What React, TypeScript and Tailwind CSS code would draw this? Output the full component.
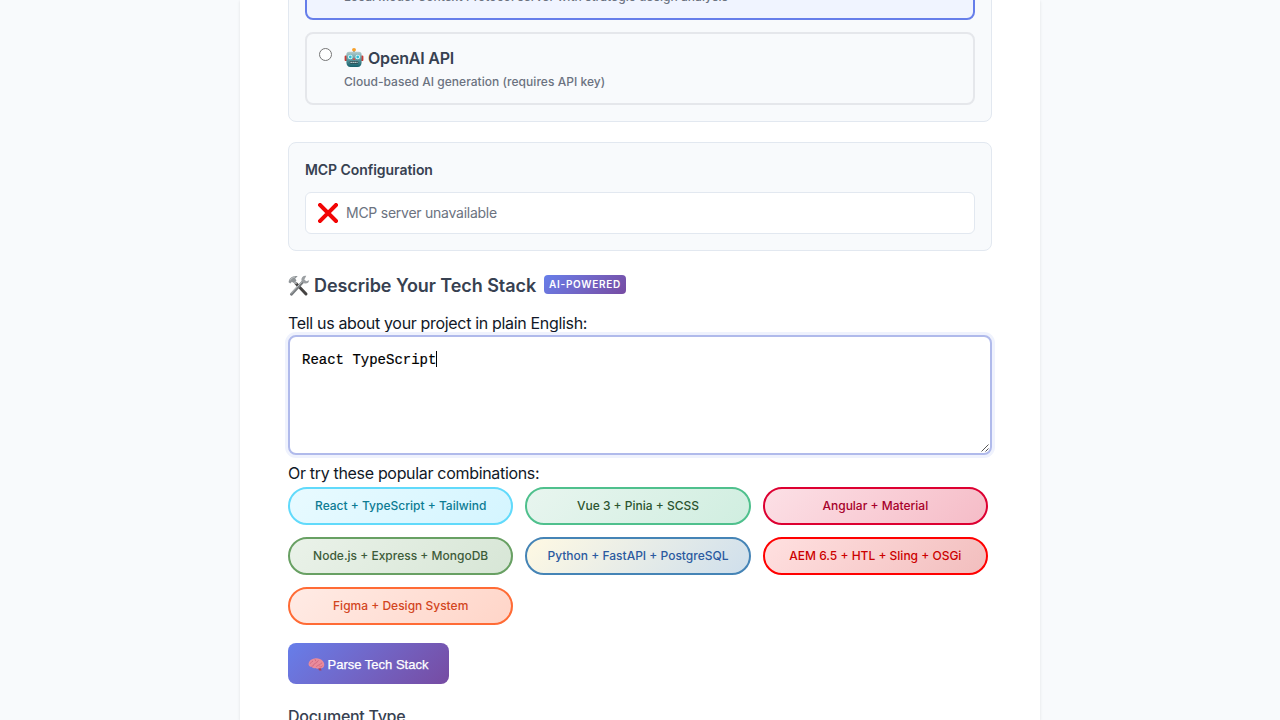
import React from 'react';

function RobotIcon() {
  return (
    <svg className="h-5 w-5 shrink-0" viewBox="0 0 20 20">
      <defs>
        <linearGradient id="robotFace" x1="0" y1="0" x2="0" y2="1">
          <stop offset="0" stopColor="#b5cccd" />
          <stop offset="0.4" stopColor="#6ba4aa" />
          <stop offset="1" stopColor="#14606b" />
        </linearGradient>
      </defs>
      <rect x="9" y="2.5" width="2" height="3" fill="#8a9a9d" />
      <ellipse cx="10" cy="1.8" rx="2" ry="1.7" fill="#f7a02b" />
      <rect x="0.6" y="7.5" width="3" height="5.6" rx="1.2" fill="#c83a34" />
      <rect x="16.4" y="7.5" width="3" height="5.6" rx="1.2" fill="#c83a34" />
      <path d="M5 3.800h10c1.700 0 2.600 1 2.600 2.700v8c0 2.700-1.500 4.500-4.100 4.500h-7c-2.600 0-4.100-1.800-4.100-4.500v-8C2.400 4.800 3.300 3.800 5 3.800z" fill="url(#robotFace)" />
      <circle cx="6.3" cy="9" r="2.3" fill="#dffcff" />
      <circle cx="13.7" cy="9" r="2.3" fill="#dffcff" />
      <circle cx="6.3" cy="9" r="1.4" fill="#2fbdd6" />
      <circle cx="13.7" cy="9" r="1.4" fill="#2fbdd6" />
      <path d="M10 9.500l1.400 2.600H8.600z" fill="#e0443c" />
      <rect x="5.7" y="13" width="8.6" height="2.8" rx="1" fill="#2b4a50" />
      <path d="M6.500 14.400h7" stroke="#d3e8ea" strokeWidth="1.3" strokeDasharray="1.3 0.7" />
    </svg>
  );
}

function ToolsIcon() {
  return (
    <svg className="h-[22px] w-[22px] shrink-0" viewBox="0 0 22 22" fill="none">
      <path d="M8 8.500L18 19" stroke="#454342" strokeWidth="3" strokeLinecap="round" />
      <path d="M5 4.500L8.500 8.800" stroke="#a7abae" strokeWidth="2" />
      <path d="M.6 7.200C.8 4.400 2.300 2.300 4.900 1.400c1.500-.5 3.400-.7 4.800-.2L7.200 3.500l1.300 1.900-3 2.600-1.600-1.200-1.600 1.700z" fill="#8f9497" />
      <path d="M2 5.500C3 3.500 4.500 2.500 7 2" stroke="#c9cccd" strokeWidth="0.8" />
      <path d="M3.400 19.300L15.200 6.500" stroke="#777b7e" strokeWidth="2.8" strokeLinecap="round" />
      <path d="M3 18.600L14.500 6.200" stroke="#c2c5c7" strokeWidth="0.9" />
      <path d="M18.300.8c-2.800-.6-5 1.400-4.900 3.900.1 2.300 2 4 4.200 3.900 2-.1 3.400-1.400 3.600-3.400l-2.900 1-2-1.800z" fill="#9b9fa2" />
    </svg>
  );
}

function CrossIcon() {
  return (
    <svg className="h-5 w-5 shrink-0" viewBox="0 0 20 20">
      <path d="M2 2L18 18M18 2L2 18" stroke="#f20505" strokeWidth="4" strokeLinecap="square" />
    </svg>
  );
}

function BrainIcon() {
  return (
    <svg className="h-[17px] w-[17px] shrink-0" viewBox="0 0 17 17">
      <path d="M9.300 11h3.400l.8 3.500h-2.200z" fill="#a8405e" />
      <path d="M.6 8.600c-.2-3 2.300-5.800 6-6.200 3-.5 6.300.4 8.200 2.700 1.500 1.800 2 4.300.9 5.700-1 1.400-2.700 1.800-4.300 1.400-1.500.8-3.200.5-4-.3-1.500.5-3 .2-3.700-.8C2 10.900.7 10 .6 8.600z" fill="#ea8b9b" />
      <path d="M2 7.800c1-.7 1.500-2.500 3-2.700M5 9.500c1.300-.3.900-2.200 2.600-2.300s1.300-2.400 3-2.700M8.200 10.500c1-.1 1.400-1.400 2.900-1.500s1.400-2.200 3-2M7 3.200l.8 2M11.500 10.800c1.200.5 2.500-.1 3.200-1.300M3.500 10.300l2-.6" fill="none" stroke="#c9607a" strokeWidth="0.75" />
    </svg>
  );
}

interface Combo {
  label: string;
  tone: string;
}

const combos: Combo[] = [
  { label: 'React + TypeScript + Tailwind', tone: 'border-[#61dafb] from-[#e8faff] to-[#d4f5ff] text-[#0c7b93]' },
  { label: 'Vue 3 + Pinia + SCSS', tone: 'border-[#4fc08d] from-[#e8f5ef] to-[#d0eee0] text-[#2c5530]' },
  { label: 'Angular + Material', tone: 'border-[#dd0031] from-[#fce0e6] to-[#f5bcc7] text-[#a6002a]' },
  { label: 'Node.js + Express + MongoDB', tone: 'border-[#68a063] from-[#eaf2e9] to-[#d7e6d6] text-[#3d5c3a]' },
  { label: 'Python + FastAPI + PostgreSQL', tone: 'border-[#4584b6] from-[#fff9e3] to-[#cfdfec] text-[#2b5aa0]' },
  { label: 'AEM 6.5 + HTL + Sling + OSGi', tone: 'border-[#ff0000] from-[#ffe0e0] to-[#f2bebe] text-[#cc0000]' },
  { label: 'Figma + Design System', tone: 'border-[#ff6b35] from-[#ffebe5] to-[#ffd5c8] text-[#d2451e]' },
];

interface OptionProps {
  title: string;
  text: string;
  icon?: React.ReactNode;
  selected?: boolean;
}

function Option({ title, text, icon, selected = false }: OptionProps) {
  return (
    <label
      className={`flex h-[73px] gap-3 rounded-lg border-2 px-3 ${
        selected ? 'border-[#667eea] bg-[#f0f4ff]' : 'border-[#e5e7eb]'
      }`}
    >
      <span
        className={`mt-[14px] h-[13px] w-[13px] shrink-0 rounded-full border bg-white ${
          selected ? 'border-[#0075ff]' : 'border-[#767676]'
        }`}
      />
      <span className="flex flex-col">
        <span className="mt-[12px] flex h-6 items-center gap-1 text-[16px] font-semibold tracking-[-0.2px] text-[#374151]">
          {icon}
          {title}
        </span>
        <span className="mt-[2px] text-[12px] leading-[19px] font-medium tracking-[0.035px] text-[#6b7280]">{text}</span>
      </span>
    </label>
  );
}

export default function App() {
  return (
    <div className="h-[720px] overflow-hidden bg-[#f8fafc] font-['Inter','Liberation_Sans',sans-serif]">
      <main className="mx-auto flex h-full w-[800px] flex-col bg-white px-12 text-[#111827] shadow-[0_1px_3px_rgba(0,0,0,0.1)]">
        <section className="-mt-[70px] flex h-[192px] shrink-0 flex-col gap-3 rounded-lg border border-[#e2e8f0] bg-[#f8fafc] p-4">
          <Option selected title="MCP Server" text="Local Model Context Protocol server with strategic design analysis" />
          <Option icon={<RobotIcon />} title="OpenAI API" text="Cloud-based AI generation (requires API key)" />
        </section>

        <section className="mt-5 h-[109px] shrink-0 rounded-lg border border-[#e2e8f0] bg-[#f8fafc] px-4 pt-4">
          <h3 className="text-[14px] leading-[22px] font-semibold tracking-[-0.06px] text-[#374151]">MCP Configuration</h3>
          <div className="mt-[11px] flex h-[42px] items-center gap-2 rounded-md border border-[#e2e8f0] bg-white px-3">
            <CrossIcon />
            <span className="pb-0.5 text-[14px] tracking-[-0.25px] text-[#6b7280]">MCP server unavailable</span>
          </div>
        </section>

        <h2 className="mt-5 flex h-[29px] shrink-0 items-center text-[18px] font-semibold text-[#374151]">
          <ToolsIcon />
          <span className="ml-1 w-[222px] tracking-[-0.06px] whitespace-nowrap">Describe Your Tech Stack</span>
          <span className="mb-0.5 ml-2 flex h-[19px] w-[82px] items-center justify-center rounded bg-linear-135 from-[#667eea] to-[#764ba2] text-[10px] font-semibold tracking-[0.72px] text-white">
            AI-POWERED
          </span>
        </h2>

        <p className="mt-[11px] h-6 shrink-0 text-[16px] leading-6 tracking-[-0.33px]">Tell us about your project in plain English:</p>
        <div className="relative h-[120px] shrink-0 rounded-lg border-2 border-[#b0baeb] bg-white px-3 py-[12px] font-['Liberation_Mono',monospace] text-[14px] leading-[18px] text-black shadow-[0_0_0_3px_#eff2fd]">
          <div className="flex items-center">
            <span className="pt-0.5 [-webkit-text-stroke:0.2px_black]">React TypeScript</span>
            <span className="h-4 w-px bg-black" />
          </div>
          <svg className="absolute right-px bottom-px h-[8px] w-[8px]" viewBox="0 0 8 8" stroke="#444" strokeWidth="0.9">
            <path d="M0.500 7.500L7.500 0.500M4.500 7.500L7.500 4.500" />
          </svg>
        </div>
        <p className="mt-[6px] h-6 shrink-0 text-[16px] leading-6 tracking-[-0.32px]">Or try these popular combinations:</p>

        <div className="mt-[2px] grid w-[700px] shrink-0 grid-cols-3 gap-3">
          {combos.map((combo) => (
            <button
              key={combo.label}
              className={`h-[38px] rounded-full border-2 bg-linear-135 text-center text-[12px] font-medium ${combo.tone}`}
            >
              {combo.label}
            </button>
          ))}
        </div>

        <button className="mt-[18px] flex h-[41px] w-[161px] shrink-0 items-center justify-center gap-[3px] rounded-lg bg-linear-135 from-[#667eea] to-[#764ba2] pt-0.5 pr-px font-['Liberation_Sans',sans-serif] text-[13px] text-white [-webkit-text-stroke:0.25px_white]">
          <BrainIcon />
          Parse Tech Stack
        </button>

        <p className="mt-5 h-6 shrink-0 text-[16px] leading-6 font-medium tracking-[-0.28px] text-[#374151]">Document Type</p>
      </main>
    </div>
  );
}
